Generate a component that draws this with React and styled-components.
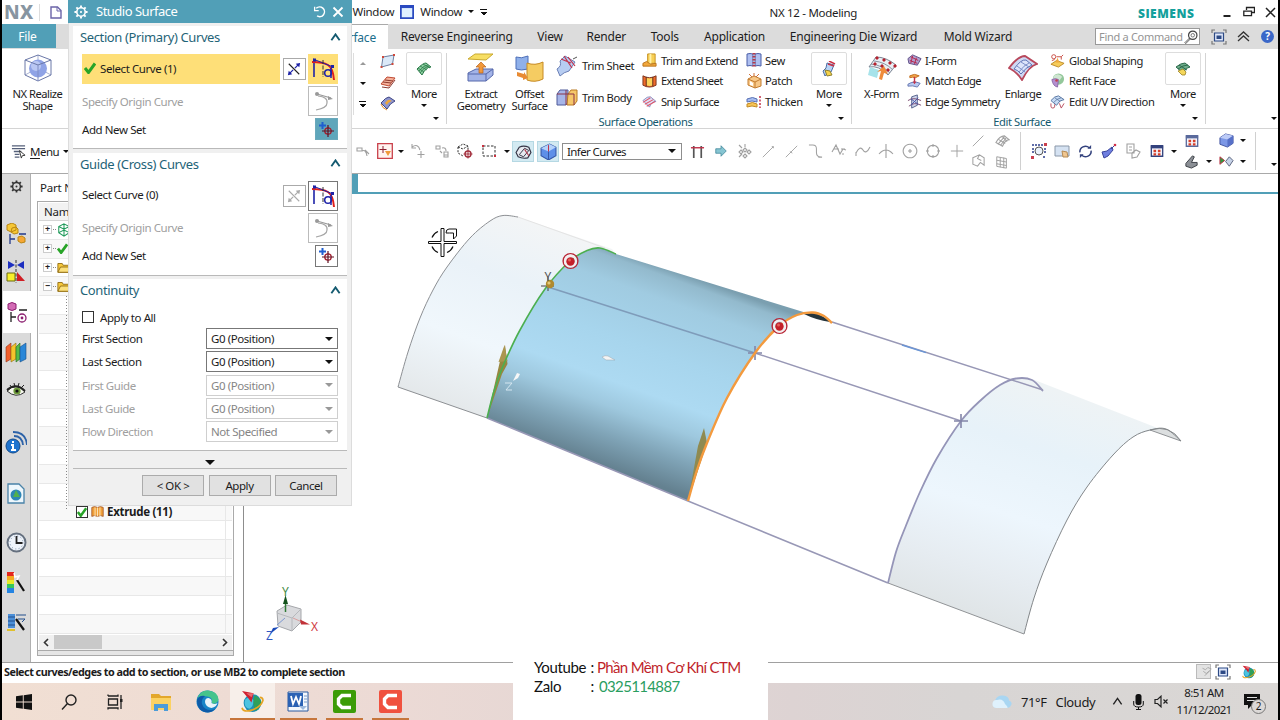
import React from 'react';
import styled, { createGlobalStyle } from 'styled-components';

const teal = '#519fb7';
const ink = '#1c1c1c';

/* smooth path through a list of points */
const curve = (pts, move = true) => {
    let d = move ? `M${pts[0][0]},${pts[0][1]}` : '';
    for (let i = 0; i < pts.length - 1; i++) {
        const p0 = pts[i - 1] || pts[i];
        const p1 = pts[i];
        const p2 = pts[i + 1];
        const p3 = pts[i + 2] || p2;
        d += ` C${p1[0] + (p2[0] - p0[0]) / 6},${p1[1] + (p2[1] - p0[1]) / 6} ${p2[0] - (p3[0] - p1[0]) / 6},${p2[1] - (p3[1] - p1[1]) / 6} ${p2[0]},${p2[1]}`;
    }
    return d;
};

const Icon = ({ w = 16, h = w, vw = 16, vh = vw, children }) => (
    <IconSvg width={w} height={h} viewBox={`0 0 ${vw} ${vh}`} fill="none">
        {children}
    </IconSvg>
);

/* ---------- icons ---------- */

const Gear = ({ size = 14, color = '#333' }) => (
    <Icon w={size}>
        <circle cx="8" cy="8" r="4.8" stroke={color} strokeWidth="1.8" />
        <path d="M8 0.5V3M8 13v2.5M0.5 8H3M13 8h2.5M2.7 2.7l1.8 1.8M11.5 11.5l1.8 1.8M13.3 2.7l-1.8 1.8M4.5 11.5l-1.8 1.8" stroke={color} strokeWidth="2.2" />
        <circle cx="8" cy="8" r="1.2" fill={color} />
    </Icon>
);

const RealizeIcon = () => (
    <Icon w={28} vw={28}>
        <path d="M14 1v13L1 21M14 14l13 7" stroke="#a9b3d2" />
        <circle cx="14" cy="14.5" r="9" fill="#8fa3e6" />
        <circle cx="12" cy="12" r="5" fill="#b9c7f3" />
        <path d="M14 1L27 6v15L14 27 1 21V6zM1 6l13 5 13-5" stroke="#6b78a8" strokeWidth="1" />
        <path d="M14 11v16" stroke="#7f8dc4" />
    </Icon>
);

const PlaneIcon = () => (
    <Icon w={16}>
        <path d="M3 4l11-2-1.5 9L1.5 14z" fill="#dbe9f8" stroke="#6d7fa0" />
        <path d="M2 3h2v2H2zM13 1h2v2h-2zM11.5 10h2v2h-2zM.5 13h2v2h-2z" fill="#d0493a" />
    </Icon>
);

const RuledIcon = () => (
    <Icon w={16}>
        <path d="M1 10l6-7 8 1-6 8z" fill="#f5b19a" stroke="#c04a33" />
        <path d="M3 8l8 1M5 6l8 1M2 13l7 1 6-8" stroke="#8c3a30" />
    </Icon>
);

const SweptIcon = () => (
    <Icon w={16}>
        <path d="M1 8q5-6 8-6l6 4q-5 2-8 8z" fill="#8d95cf" stroke="#3f4684" />
        <path d="M5 8q3-4 5-3l2 1q-4 1-5 4z" fill="#f0a637" />
        <path d="M1 9q1 4 6 6" stroke="#e08a25" />
    </Icon>
);

const MeshIcon = () => (
    <Icon w={16}>
        <path d="M1 8q6-6 9-6l5 4q-5 0-9 8z" fill="#8ccfa0" stroke="#2c7a4a" />
        <path d="M3 10q5-6 9-6M4 12q4-6 9-7M4 5l7 4M7 3l7 4M2 7l6 4" stroke="#2c7a4a" strokeWidth=".8" />
    </Icon>
);

const ExtractIcon = () => (
    <Icon w={28} h={30} vw={28} vh={30}>
        <path d="M1 6l7-5h18l-7 6z" fill="#f7de63" stroke="#c9a92f" />
        <path d="M1 20l8-4h17v6l-7 6H1z" fill="#a3b4e8" stroke="#5668ab" />
        <path d="M1 21h18l7-5M19 21v7" stroke="#5668ab" />
        <path d="M14 9l5 5h-3v6h-4v-6H9z" fill="#f0983a" stroke="#b9621a" strokeWidth=".7" />
    </Icon>
);

const OffsetIcon = () => (
    <Icon w={29} vw={29}>
        <path d="M1 3q5 2 12-1v13q-7 2-12 0z" fill="#8fb0ea" stroke="#4d6fb8" />
        <path d="M12 9q8 3 16-1v17q-8 4-16 1z" fill="#f5cc62" stroke="#c78a23" />
        <path d="M2 18l7 2v-2l4 6-5 2v-2l-6-2z" fill="#e88b33" />
    </Icon>
);

const TrimSheetIcon = () => (
    <Icon w={22} vw={22}>
        <path d="M4 6L9 1l10 6-6 9q-5 1-9 5l-3-7q5-3 3-8z" fill="#b7cdf2" stroke="#6b7fb5" />
        <path d="M8 1l8 12M12 2l7 9M5 4l10 4" stroke="#c2324a" strokeWidth="1.2" />
        <path d="M17 4l4-2" stroke="#555" />
    </Icon>
);

const TrimBodyIcon = () => (
    <Icon w={22} h={17} vw={22} vh={17}>
        <path d="M1 5l3-4h8v12l-2 3H1z" fill="#a6b5e8" stroke="#4f5a99" />
        <path d="M12 5l3-4h6v11l-3 4h-7z" fill="#f6c76a" stroke="#b97a25" />
        <path d="M1 5h17v11M10 1v15" stroke="#8c3346" />
    </Icon>
);

const TrimExtendIcon = () => (
    <Icon w={15}>
        <path d="M6 1h8v10H6z" fill="#f7cf55" stroke="#c48f1e" />
        <path d="M1 11l4-2 4 3 6-1v3H1z" fill="#f2a83c" stroke="#b9731c" />
        <path d="M9 1v10" stroke="#fff1a8" strokeWidth="2" />
    </Icon>
);

const ExtendIcon = () => (
    <Icon w={15}>
        <path d="M1 3q7 4 14 0v10q-7 4-14 0z" fill="#ef6a2a" stroke="#7a3520" />
        <path d="M4.5 5q4 1.5 7 0v8q-3 1.5-7 0z" fill="#fbd45b" />
        <path d="M4.5 4v10M11.5 4v10" stroke="#5a2a1a" />
    </Icon>
);

const SnipIcon = () => (
    <Icon w={15}>
        <path d="M1 7q5-5 8-4l6 5q-5 0-7 6z" fill="#dfe2f8" stroke="#8b8fc0" />
        <path d="M1 9l8-5M3 11l9-5M5 13l9-5" stroke="#e0566a" strokeWidth="1.1" />
    </Icon>
);

const SewIcon = () => (
    <Icon w={16}>
        <path d="M1 2q3-1 6 0v12q-3-1-6 0zM15 2q-3-1-6 0v12q3-1 6 0z" fill="#aebff0" stroke="#4b5fa8" />
        <path d="M8 1v14" stroke="#b33a4c" strokeWidth="3" strokeDasharray="1.5 1.5" />
    </Icon>
);

const PatchIcon = () => (
    <Icon w={16}>
        <path d="M2 6l6-3 7 3v7l-6 2-7-3z" fill="#f8c888" stroke="#c27c30" />
        <path d="M2 6l7 3 6-3M9 9v6" stroke="#c27c30" />
        <path d="M3 1l3 3M8 0v3M13 1l-3 3" stroke="#d0713a" />
        <path d="M4 8l3 2v3l-3-1z" fill="#fff" />
    </Icon>
);

const ThickenIcon = () => (
    <Icon w={16}>
        <path d="M1 5q6-3 10 0v3q-5-2-10 0z" fill="#a6bdf0" stroke="#5971b5" />
        <path d="M1 10q6-3 10 0v3q-5-2-10 0z" fill="#f6c455" stroke="#c28a25" />
        <path d="M14 2v12" stroke="#c2324a" strokeWidth="1.5" strokeDasharray="2 1.5" />
    </Icon>
);

const CutMoreIcon = () => (
    <Icon w={16}>
        <path d="M6 2l7 2-3 7q-4 0-6 4l-2-5q4-2 4-8z" fill="#b9d3f5" stroke="#4c6fa8" />
        <path d="M4 9l5 1 2 4-5 1z" fill="#f5d24c" stroke="#8f8130" />
        <path d="M8 0l6 3M7 3l6 2" stroke="#cc3145" strokeWidth="1.5" />
    </Icon>
);

const XFormIcon = () => (
    <Icon w={30} h={27} vw={30} vh={27}>
        <path d="M9 2q10 0 20 8l-8 10Q12 10 2 12z" fill="#e9eef5" stroke="#7d8795" />
        <path d="M7 6q11 1 19 9M4 9q11 1 19 9" stroke="#8a93a0" />
        <path d="M3 12l9 3-2 8-9-3z" fill="#a7e3ea" />
        <path d="M12 24l2-8-4 1 7-6 4 8-4-1-2 7z" fill="#ef8b3b" />
        <path d="M9 2h2v2H9zM16 4h2v2h-2zM22 7h2v2h-2zM27 10h2v2h-2zM7 8h2v2H7zM14 10h2v2h-2zM20 14h2v2h-2z" fill="#b5232f" stroke="#b5232f" />
    </Icon>
);

const IFormIcon = () => (
    <Icon w={15}>
        <path d="M1 6l5-4 9 4-4 7-9-2z" fill="#b0a0cf" stroke="#5d4f86" />
        <path d="M4 4l8 4M3 8l8 3M6 3L4 11M10 5l-2 7" stroke="#b5234a" />
    </Icon>
);

const MatchIcon = () => (
    <Icon w={15}>
        <path d="M3 3q5-3 10 0l-4 2q-3-1-6 0z" fill="#f3a74a" stroke="#c16f22" />
        <path d="M8 4v6" stroke="#c2324a" strokeWidth="1.5" />
        <path d="M1 12q6-4 13-1l-3 4q-5-2-10-1z" fill="#b9c8f0" stroke="#6376b0" />
        <path d="M6 9l2 3 2-3z" fill="#c2324a" />
    </Icon>
);

const EdgeSymIcon = () => (
    <Icon w={15}>
        <path d="M5 3l6-2v11l-6 3z" fill="#cfd6ec" stroke="#525f8a" />
        <path d="M1 7q6-4 14 0M2 13q6-5 13-1" stroke="#7a4a70" />
        <path d="M4 5l8 6M12 4l-8 8" stroke="#4658a8" />
    </Icon>
);

const EnlargeIcon = () => (
    <Icon w={30} h={26} vw={30} vh={26}>
        <path d="M1 13Q10 1 17 1l12 8Q21 11 14 25 9 17 1 13z" fill="#cfd8f3" stroke="#b8485c" strokeWidth="1.8" />
        <path d="M6 14Q13 4 18 5l6 5q-6 2-11 9-3-4-7-5z" fill="#dde4fa" stroke="#5d71b5" />
        <path d="M9 11l8 6M13 7l8 5M11 17q5-7 10-9" stroke="#7d8fc8" />
    </Icon>
);

const GlobalIcon = () => (
    <Icon w={15}>
        <circle cx="4" cy="4" r="2.2" stroke="#c8493f" />
        <path d="M7 4h5l2-2M12 4v3M2 8l3-1" stroke="#c8493f" />
        <path d="M1 12l6-4 8 3-6 4z" fill="#f6cc5a" stroke="#bd8a28" />
        <path d="M6 10l2-5 2 5" fill="#f0a83e" />
    </Icon>
);

const RefitIcon = () => (
    <Icon w={15}>
        <circle cx="9" cy="6.5" r="6" fill="#93c79a" />
        <path d="M4 3q5-4 9 1l-3 4-7 1z" fill="#cfe6d2" />
        <path d="M2 7q4-2 7 0l-1 8q-5-1-6-8z" fill="#b48fd0" stroke="#8a6aa8" />
        <circle cx="7" cy="8" r="1.4" fill="#c4404d" />
    </Icon>
);

const UVIcon = () => (
    <Icon w={15}>
        <path d="M1 7q4-5 8-5l6 4q-5 0-8 6z" fill="#c8dcf5" stroke="#54729f" />
        <path d="M1 10v3q0 2 2 2t2-2v-2M10 10l2 5 3-5" stroke="#b84a5c" />
        <path d="M5 4l6 4M4 9q3-4 8-5" stroke="#54729f" strokeWidth=".8" />
    </Icon>
);

const EditMoreIcon = () => (
    <Icon w={16}>
        <path d="M1 6q5-4 9-4l5 4q-4 0-7 6z" fill="#6fae8c" stroke="#2d6a4c" />
        <path d="M3 8q5-4 10-4M4 4l8 5" stroke="#2d6a4c" />
        <path d="M3 10l5-2 3 3-1 3H7z" fill="#f5d75b" stroke="#9a8125" strokeWidth=".8" />
    </Icon>
);

const CurveRuleIcon = () => (
    <Icon w={24} vw={24}>
        <path d="M3 20V2" stroke="#1d22a8" strokeWidth="1.6" />
        <path d="M1 5q11 0 16 3t6 15" stroke="#e0201c" strokeWidth="2" />
        <path d="M2 2l20 8" stroke="#1d22a8" />
        <path d="M2 1.5h3v3H2zM20 8h3v3h-3z" fill="#1d22a8" />
        <path d="M12 3v17" stroke="#333" strokeDasharray="4 1.5" />
        <path d="M20 11v10" stroke="#1d22a8" strokeWidth="1.5" />
        <circle cx="17" cy="16" r="3.3" stroke="#1d22a8" strokeWidth="1.5" />
    </Icon>
);

const ReverseIcon = ({ off }) => (
    <Icon w={14}>
        <path d="M2 2l12 12" stroke={off ? '#aaa' : '#222'} strokeWidth="1.3" />
        <path d="M3 13l4-4M9 7l4-4" stroke={off ? '#aaa' : '#1d22a8'} strokeWidth="1.5" />
        <path d="M15 1l-1 5-4-4zM1 15l1-5 4 4z" fill={off ? '#aaa' : '#1d22a8'} />
    </Icon>
);

const OriginIcon = () => (
    <Icon w={22} vw={22}>
        <path d="M6 6q10 1 9 7 0 5-11 7" stroke="#a5a5a5" strokeWidth="1.2" />
        <path d="M5 4l14 4" stroke="#999" strokeWidth="1.2" />
        <circle cx="5" cy="4" r="2" fill="#999" />
        <path d="M21 9l-5-3v4z" fill="#999" />
    </Icon>
);

const NewSetIcon = () => (
    <Icon w={17} vw={17}>
        <path d="M4.5 1v7M1 4.5h7" stroke="#1f5fd0" strokeWidth="2" />
        <circle cx="10" cy="10" r="3.2" stroke="#a32030" strokeWidth="1.3" />
        <path d="M10 4v12M4 10h12" stroke="#5e1020" strokeWidth="1.2" />
    </Icon>
);

const Check = ({ size = 12 }) => (
    <Icon w={size} vw={12}>
        <path d="M1 6l3.5 4.5L11 1.5" stroke="#28a428" strokeWidth="3" />
    </Icon>
);

const WindowsIcon = ({ color = '#9aa0a8' }) => (
    <Icon w={14}>
        <path d="M1.5 2h13v12h-13z" fill="#f4f7ff" stroke={color} strokeWidth="1.5" />
        <path d="M1 3.5h14" stroke={color} strokeWidth="3" />
        <path d="M4 6.5h3v3H4zM9 6.5h3v3H9zM4 10.500h3v2.500H4zM9 10.500h3v2.500H9z" fill="#d6402b" />
    </Icon>
);

const CubeIcon = () => (
    <Icon w={15}>
        <path d="M1 5l6-4 8 2v8l-6 4-8-3z" fill="#7c97e6" stroke="#41539f" />
        <path d="M1 5l8 2 6-4-8-2z" fill="#bccbf7" />
        <path d="M9 7v8l6-4V3z" fill="#5770c8" />
    </Icon>
);

const NxBall = ({ size = 22 }) => (
    <Icon w={size} vw={22}>
        <circle cx="11" cy="12.5" r="8.5" fill="#1d8fb8" />
        <path d="M4 9q5-4 8 1 0 6-4 8-6-2-4-9z" fill="#4cc3e0" />
        <path d="M13 5q5 2 6.500 7-1 6-6 8-3-7-.5-15z" fill="#2fa05a" />
        <path d="M1 1l11 2-2 9-3-4z" fill="#cf1f2f" />
        <path d="M5 3l7 0-2 4z" fill="#e86a70" />
        <path d="M1 17q1 5 10 2 8-3 10-9 0-3-3-3" stroke="#e5a423" strokeWidth="1.6" />
    </Icon>
);

const FullscreenIcon = () => (
    <Icon w={16}>
        <path d="M1 4V1h3M12 1h3v3M15 12v3h-3M4 15H1v-3" stroke="#777" strokeWidth="1.2" />
        <path d="M3.5 4h9v8h-9z" fill="#dfe7fa" stroke="#2d4a85" strokeWidth="1.2" />
        <path d="M5.5 6.500h5v3.500h-5z" fill="#2d4a85" />
    </Icon>
);

const Chevron = ({ w = 12, color = '#145a70', sw = 2 }) => (
    <Icon w={w} h={w * 0.75} vw={12} vh={9}>
        <path d="M1.5 8L6 1.5 10.5 8" stroke={color} strokeWidth={sw} />
    </Icon>
);

const Grey = ({ d, size = 16 }) => (
    <Icon w={size}>
        <path d={d} stroke="#a0a0a0" strokeWidth="1.1" />
    </Icon>
);

/* ---------- ribbon parts ---------- */

const Big = ({ icon, w, children }) => (
    <BigButton $w={w}>
        <BigIcon>{icon}</BigIcon>
        <span>{children}</span>
    </BigButton>
);

const More = ({ icon }) => (
    <MoreButton>
        <MoreFrame>{icon}</MoreFrame>
        <span>More</span>
        <Caret />
    </MoreButton>
);

const List = ({ w, tall, items, gap, tight }) => (
    <RibbonList $w={w} $tall={tall} $tight={tight}>
        {items.map(([icon, text]) => (
            <RibbonItem key={text} $gap={gap}>
                {icon}
                {text}
            </RibbonItem>
        ))}
    </RibbonList>
);

const Ribbon = () => (
    <RibbonBar>
        <RibbonGroup $w={445}>
            <GroupBody>
                <Big w={71} icon={<RealizeIcon />}>NX Realize<br />Shape</Big>
                <GallerySpacer />
                <GalleryArrows>
                    <Caret $up $color="#999" />
                    <Caret />
                    <Caret $line />
                </GalleryArrows>
                <GalleryIcons>
                    <PlaneIcon />
                    <RuledIcon />
                    <SweptIcon />
                </GalleryIcons>
                <More icon={<MeshIcon />} />
            </GroupBody>
            <GroupFoot><Caret /></GroupFoot>
        </RibbonGroup>
        <RibbonGroup $w={405}>
            <GroupBody $pad={8}>
                <Big w={52} icon={<ExtractIcon />}>Extract<br />Geometry</Big>
                <Big w={45} icon={<OffsetIcon />}>Offset<br />Surface</Big>
                <List tall w={89} gap={4} items={[[<TrimSheetIcon />, 'Trim Sheet'], [<TrimBodyIcon />, 'Trim Body']]} />
                <List tight w={104} gap={4} items={[[<TrimExtendIcon />, 'Trim and Extend'], [<ExtendIcon />, 'Extend Sheet'], [<SnipIcon />, 'Snip Surface']]} />
                <List w={66} gap={3} items={[[<SewIcon />, 'Sew'], [<PatchIcon />, 'Patch'], [<ThickenIcon />, 'Thicken']]} />
                <More icon={<CutMoreIcon />} />
            </GroupBody>
            <GroupFoot>Surface Operations<Caret /></GroupFoot>
        </RibbonGroup>
        <RibbonGroup $w={354}>
            <GroupBody $pad={5}>
                <Big w={49} icon={<XFormIcon />}>X-Form</Big>
                <List tight w={91} gap={3} items={[[<IFormIcon />, 'I-Form'], [<MatchIcon />, 'Match Edge'], [<EdgeSymIcon />, 'Edge Symmetry']]} />
                <Big w={52} icon={<EnlargeIcon />}>Enlarge</Big>
                <List w={116} gap={4} items={[[<GlobalIcon />, 'Global Shaping'], [<RefitIcon />, 'Refit Face'], [<UVIcon />, 'Edit U/V Direction']]} />
                <More icon={<EditMoreIcon />} />
            </GroupBody>
            <GroupFoot $shift={-12}>Edit Surface<Caret /></GroupFoot>
        </RibbonGroup>
        <RibbonTail><Caret /></RibbonTail>
    </RibbonBar>
);

const snapIcons = [
    <Icon w={15}><path d="M4 2v13M12 2v13" stroke="#555" strokeWidth="1.8" /><path d="M1 4h14" stroke="#c2324a" strokeWidth="1.5" /></Icon>,
    <Icon w={12}><path d="M1 5h7V1l7 7-7 7v-4H1z" fill="#86c5d2" stroke="#3c8397" /></Icon>,
    <Grey d="M2 2l3 3M2 14l3-3M8 5l2 2-2 2-2-2zM8 1v3M12 7l2 2-2 2-2-2zM8 11l2 2-2 2-2-2zM4 7l2 2-2 2-2-2z" />,
    <Grey size={13} d="M1 15L14 2M12 2h2v2" />,
    <Grey size={13} d="M1 15L15 1M6 8l3 2" />,
    <Grey size={15} d="M3 1h2q4 0 4 4v4q0 5 5 5M1 1h4M11 14h4" />,
    <Grey size={16} d="M1 9l4-7 4 9 3-5 3 1M3 6h5M10 6h4M11 11h2" />,
    <Grey size={16} d="M1 10q4-8 7-3t7-3M1 13v-4" />,
    <Grey size={16} d="M8 1v14M1 11q7-8 14 0" />,
    <Grey size={16} d="M8 1.2a6.800 6.800 0 1 0 .01 0zM8 6v4M6 8h4" />,
    <Grey size={16} d="M8 2.200a5.800 5.800 0 1 0 .01 0zM8 1v3M8 12v3M1 8h3M12 8h3" />,
    <Grey size={14} d="M8 1v14M1 8h14" />,
];

const Toolbar = () => (
    <ToolbarBar>
        <MenuButton>
            <Icon w={15}>
                <path d="M1 2h14M1 5h14M3 8h8M4 11h5M4 14h5" stroke="#55607a" strokeWidth="1.4" />
                <path d="M9 7l6 5-3 .5L11 15z" fill="#fff" stroke="#333" />
            </Icon>
            <span><u>M</u>enu</span>
            <Caret />
        </MenuButton>
        <Slot $w={22}><Grey d="M2 5h5v3H2zM10 7l4 4M7 8q4-2 5 5" /></Slot>
        <Slot $w={22}>
            <Icon w={16}><path d="M.7.7h14.600v14.600H.7z" fill="#fff3f0" stroke="#c9414b" strokeWidth="1.3" /><path d="M6 3v7M2.5 6.5h7" stroke="#8c2030" /><path d="M8 8h6l-3 5z" fill="#f09a3a" /></Icon>
        </Slot>
        <Slot $w={10}><Caret /></Slot>
        <Slot $w={24}><Grey d="M2 4q6-4 8 3M2 1v4h4M11 8v7M7.5 11.5h7" /></Slot>
        <Slot $w={24}><Grey d="M2 3h4v3H2zM8 5q4-1 4 3M6 8l2 2M10 9h4v5h-4zM10 12h4" /></Slot>
        <Slot $w={22}>
            <Icon w={16}><path d="M1 4l5-3 5 2v5M1 4v6l5 3M1 4l5 2 5-3" stroke="#333" strokeDasharray="2 1.2" /><circle cx="11" cy="11" r="3" stroke="#a3303e" strokeWidth="1.4" /><path d="M11 6.5v9M6.5 11h9" stroke="#a3303e" /></Icon>
        </Slot>
        <Slot $w={26}>
            <Icon w={16}><path d="M2 3h12v10H2z" stroke="#333" strokeDasharray="2.5 1.5" /><path d="M1 2h2v2H1zM13 12h2v2h-2z" fill="#c9303e" /></Icon>
        </Slot>
        <Slot $w={10}><Caret /></Slot>
        <Toggle>
            <Icon w={17}><path d="M1 9l3-5q4-2 9 0l2 5-3 5q-5 1-9-1z" fill="#e7eaf0" stroke="#334" strokeWidth="1.1" /><path d="M4 11l5-6 4 2-5 6z" stroke="#334" strokeWidth=".9" /><path d="M9 6l4 6" stroke="#b33a4c" /></Icon>
        </Toggle>
        <Toggle>
            <Icon w={17}><path d="M1 5l8-4 6 3v8l-7 4-7-4z" fill="#5e8fe8" stroke="#3557a8" /><path d="M1 5l7 3 7-4-6-3z" fill="#b5d3fb" /><path d="M8 8v8" stroke="#3557a8" /><path d="M8 2v6" stroke="#c2324a" /></Icon>
        </Toggle>
        <RuleSelect>Infer Curves<Caret $big /></RuleSelect>
        <SnapIcons>
            {snapIcons.map((icon, i) => <Slot key={i} $w={23.55}>{icon}</Slot>)}
        </SnapIcons>
        <Stack $w={20}>
            <Grey size={13} d="M1 15L14 2" />
            <Grey size={15} d="M2 5l7-3 5 3v8l-4-3-3 4-5-2zM9 2l-2 4 4 2" />
        </Stack>
        <Stack $w={27}>
            <Grey size={15} d="M1 9q4-7 9-7l5 4q-4 0-7 7zM4 6l7 4M8 3l5 5M3 11l7-8M6 12l6-8" />
            <Grey size={14} d="M2 2l11 2v11L2 13zM6 3v11M10 3v12M2 6l11 2M2 10l11 2" />
        </Stack>
        <Slot $w={4} />
        <VRule $h={38} />
        <Slot $w={6} />
        <Slot $w={24}>
            <Icon w={16}><path d="M1 2h14M1 14h3M12 14h3M2 5v6M14 5v6" stroke="#2c3f8c" strokeDasharray="2 1" strokeWidth="1.5" /><circle cx="8" cy="8" r="4" fill="#e9f2fb" stroke="#555" /><path d="M0 13h3v3H0zM13 0h3v3h-3z" fill="#c9404e" /></Icon>
        </Slot>
        <Slot $w={23}>
            <Icon w={16}><path d="M1 3h14v10H1z" fill="#d5e2f2" stroke="#8a97a8" /><path d="M8 8l5 1 1 5H9z" fill="#f0c690" stroke="#b58b55" /></Icon>
        </Slot>
        <Slot $w={24}>
            <Icon w={15}><path d="M2 9a6 6 0 0 1 10-5M14 7a6 6 0 0 1-10 5" stroke="#33427d" strokeWidth="1.6" /><path d="M10 5h4V1zM6 11H2v4z" fill="#33427d" /></Icon>
        </Slot>
        <Slot $w={22}>
            <Icon w={16}><path d="M1 9l5-1 5-4 1 3-5 6-4 2z" fill="#6f7fe0" stroke="#3a459c" /><path d="M10 6l4-4" stroke="#3a459c" /><circle cx="14" cy="2" r="1.3" fill="#d0304a" /></Icon>
        </Slot>
        <Slot $w={26}><Grey d="M2 1h7v9H2zM4 4h3M4 7h3M7 10l4-3 4 2-3 5-5 1z" /></Slot>
        <Slot $w={22}><WindowsIcon color="#33427d" /></Slot>
        <Slot $w={12}><Caret /></Slot>
        <Stack $w={24}>
            <WindowsIcon color="#5a6a9c" />
            <Icon w={15}><path d="M2 10l7-8 2 1-3 6h6v3l-6 3-6-2z" fill="#8b8f95" stroke="#3b3f45" /></Icon>
        </Stack>
        <Stack $w={11}><span /><Caret /></Stack>
        <Stack $w={23}>
            <CubeIcon />
            <Icon w={15}><path d="M1 3l5 4-5 4z" fill="#2c9a3e" stroke="#c2324a" /><path d="M7 8l4-5 4 4-4 6z" fill="#c7d3e8" stroke="#55607a" /></Icon>
        </Stack>
        <Stack $w={10}><Caret /><Caret /></Stack>
        <Slot $w={7} />
        <VRule $h={38} />
        <ToolbarTail><Caret /></ToolbarTail>
    </ToolbarBar>
);

/* ---------- left side ---------- */

const ResourceBar = () => (
    <Resources>
        <ResourceTab $h={24}><Gear size={13} /></ResourceTab>
        <ResourceTab $h={52} $end>
            <Icon w={20} h={22} vw={20} vh={22}>
                <path d="M1 2l5-2 4 2v5l-5 2-4-2zM6 5l4-1 2 2v4l-4 1-3-2z" fill="#f6c735" stroke="#b98612" />
                <path d="M4 11v10M4 16h5M13 11h7" stroke="#223a8c" strokeWidth="1.3" />
                <path d="M12 14l4-1 3 2v4l-4 1-3-2z" fill="#f6a735" stroke="#b98612" />
            </Icon>
        </ResourceTab>
        <ResourceTab $h={38} $end>
            <Icon w={20} h={23} vw={20} vh={23}>
                <path d="M2 1l7 4-7 4zM18 1l-7 4 7 4z" fill="#1d2fc0" />
                <path d="M10 0v23" stroke="#333" strokeDasharray="3 1.5" />
                <path d="M1 13h8v8H1z" fill="#f8ef2a" stroke="#6b6a10" />
                <path d="M11 12l8 9h-8z" fill="#d01e24" />
            </Icon>
        </ResourceTab>
        <ResourceTab $h={42} $active>
            <Icon w={20} h={22} vw={20} vh={22}>
                <path d="M1 3q4-3 8 0v5q-4 3-8 0z" fill="#d36bb5" stroke="#8c1f70" />
                <path d="M4 11v10M4 16h5M12 9h8" stroke="#222" strokeWidth="1.3" />
                <circle cx="15" cy="17" r="4" stroke="#8c1f70" strokeWidth="1.3" />
                <circle cx="15" cy="17" r="1.4" fill="#8c1f70" />
            </Icon>
        </ResourceTab>
        <ResourceTab $h={38}>
            <Icon w={22} vw={22}>
                <path d="M1 6l5-4v16l-5 3z" fill="#f2602c" stroke="#963317" strokeWidth=".6" />
                <path d="M6 6l5-4v16l-5 3z" fill="#f5c32c" stroke="#8c6a10" strokeWidth=".6" />
                <path d="M11 6l4-4v16l-4 3z" fill="#55ba4a" stroke="#22691d" strokeWidth=".6" />
                <path d="M15 6l6-4v16l-6 3z" fill="#2a87d8" stroke="#184f86" strokeWidth=".6" />
            </Icon>
        </ResourceTab>
        <ResourceTab $h={38}>
            <Icon w={20} h={14} vw={20} vh={14}>
                <path d="M1 8q9-9 18 1-9 7-18-1z" fill="#f6f8ee" stroke="#333" />
                <circle cx="11" cy="8" r="3.6" fill="#6d9a3a" />
                <circle cx="11" cy="8" r="1.6" fill="#111" />
                <path d="M1 6l2 1M4 2l2 3M8 0l1 4M13 0l-1 4M18 2l-3 3" stroke="#222" />
                <path d="M1 7q9-8 18 1" stroke="#222" strokeWidth="1.8" />
            </Icon>
        </ResourceTab>
        <ResourceTab $h={66}>
            <Icon w={22} h={23} vw={22} vh={23}>
                <circle cx="8" cy="15" r="7" fill="#1f74cf" stroke="#134b8c" />
                <path d="M8 10v2M6 14h2v5M6 19h5" stroke="#fff" strokeWidth="2" />
                <path d="M9 5q8 0 9 9M8 1q13 0 14 13" stroke="#2c62a8" strokeWidth="1.8" />
            </Icon>
        </ResourceTab>
        <ResourceTab $h={36}>
            <Icon w={18} h={21} vw={18} vh={21}>
                <path d="M1 1h11l5 5v14H1z" fill="#eef7fc" stroke="#4a83a8" strokeWidth="1.3" />
                <circle cx="9" cy="12" r="5.5" fill="#2e86b5" />
                <path d="M9 7l4 7H6z" fill="#53b04c" />
            </Icon>
        </ResourceTab>
        <ResourceTab $h={62}>
            <Icon w={21} vw={21}>
                <circle cx="10.5" cy="10.5" r="9" fill="#eef3fa" stroke="#65707f" strokeWidth="2" />
                <circle cx="10.5" cy="10.5" r="6.5" stroke="#7e93b0" strokeDasharray="1 2.4" />
                <path d="M10.5 4v7h6" stroke="#222" strokeWidth="1.8" />
            </Icon>
        </ResourceTab>
        <ResourceTab $h={18}>
            <Icon w={20} h={21} vw={20} vh={21}>
                <path d="M1 0h7v4H1z" fill="#e3261c" />
                <path d="M1 4h7v4H1z" fill="#f6a81f" />
                <path d="M1 8h7v4H1z" fill="#e7ea28" />
                <path d="M1 12h7v4H1z" fill="#37c75a" />
                <path d="M1 16h7v5H1z" fill="#2484e3" />
                <path d="M11 8l7 11" stroke="#111" strokeWidth="2.2" />
                <path d="M8 1l1 4 4-1-2 4" stroke="#fff" strokeWidth="1.5" />
            </Icon>
        </ResourceTab>
        <ResourceTab $h={62}>
            <Icon w={21} h={20} vw={21} vh={20}>
                <path d="M2 2h7v14H2z" fill="#4b8fd8" />
                <path d="M2 5h7M2 9h7M2 13h7M10 3h10M12 7h7l-3 3" stroke="#234f8c" />
                <path d="M1 18h8" stroke="#e0c02c" strokeWidth="2" />
                <path d="M10 7l8 11" stroke="#111" strokeWidth="2.2" />
            </Icon>
        </ResourceTab>
    </Resources>
);

const Folder = () => (
    <Icon w={14}>
        <path d="M1 14V4h5l1 2h8v8z" fill="#f6c83c" stroke="#8f6a10" />
        <path d="M1 14l3-6h12l-3 6z" fill="#fbe07c" stroke="#8f6a10" />
    </Icon>
);

const treeTop = [
    ['+', <Icon w={14}><path d="M8 1l6 3v7l-6 4-6-4V4zM2 4l6 3 6-3M8 1v14M2 11l6-3 6 3" stroke="#1f9a5a" strokeWidth="1.2" /></Icon>],
    ['+', <Check size={11} />],
    ['+', <Folder />],
    ['−', <Folder />],
];

const Navigator = () => (
    <NavPane>
        <NavTitle>Part Navigator</NavTitle>
        <NavTable>
            <NavHead>Name</NavHead>
            {treeTop.map(([sign, icon], i) => (
                <NavRow key={i} $alt={i % 2}>
                    <Expander>{sign}</Expander>
                    <Dots />
                    {icon}
                </NavRow>
            ))}
            {Array.from({ length: 11 }, (_, i) => <NavRow key={i} $alt={i % 2} $branch />)}
            <NavRow $alt $leaf>
                <GreenBox><Check size={10} /></GreenBox>
                <Icon w={13}>
                    <path d="M1 3q3-2 7 0 4-2 7 0v11q-3-2-7 0-4-2-7 0z" fill="#f0a03a" stroke="#a3501a" />
                    <path d="M5 3v11M8 3v11M11 3v11" stroke="#fff0d0" />
                </Icon>
                Extrude (11)
            </NavRow>
            {Array.from({ length: 6 }, (_, i) => <NavRow key={i} $alt={i % 2} />)}
            <HScroll>
                <Icon w={9} vw={9}><path d="M6 1L2.5 4.5 6 8" stroke="#333" strokeWidth="1.6" /></Icon>
                <Thumb />
                <Icon w={9} vw={9}><path d="M3 1l3.5 3.5L3 8" stroke="#333" strokeWidth="1.6" /></Icon>
            </HScroll>
        </NavTable>
        <NavFoot />
    </NavPane>
);

/* ---------- model ---------- */

const ghostLeft = [[398, 387], [408, 352], [420, 318], [433, 290], [447, 267], [470, 238], [490, 221], [503, 215.5], [518, 217]];
const green = [[487, 418], [494, 391], [503, 366], [520, 330], [545, 289], [570, 261], [587, 250.5], [600, 248], [616, 254]];
const orange = [[688, 501], [697, 470], [707, 443], [727, 398], [755, 353], [779, 326], [797, 315], [813, 312.5], [824, 316], [832, 323]];
const violet = [[888, 583], [896, 552], [905, 528], [920, 492], [937, 458], [961, 421], [981, 400], [1000, 385], [1016, 378.5], [1032, 380], [1043, 391]];
const ghostRight = [[1024, 634], [1034, 598], [1047, 563], [1067, 520], [1087, 487], [1113, 455], [1133, 437], [1150, 430], [1166, 429], [1181, 441]];
const back = pts => [...pts].reverse();

const Handle = ({ x, y }) => (
    <g>
        <circle cx={x} cy={y} r="7.4" fill="none" stroke="#b82636" strokeWidth="1.4" />
        <circle cx={x} cy={y} r="5.4" fill="none" stroke="#f3eef0" strokeWidth="2.4" />
        <circle cx={x} cy={y + 0.5} r="4.2" fill="#c4202a" />
        <circle cx={x - 1} cy={y - 1} r="1.5" fill="#e4605a" />
    </g>
);

const Model = () => (
    <ModelSvg viewBox="244 194 1034 468">
        <defs>
            <linearGradient id="blue" gradientUnits="userSpaceOnUse" x1="700" y1="280" x2="630" y2="475">
                <stop offset="0" stopColor="#7b9fb0" />
                <stop offset=".04" stopColor="#93bacd" />
                <stop offset=".15" stopColor="#a0cbe1" />
                <stop offset=".4" stopColor="#a7d5ed" />
                <stop offset=".6" stopColor="#addaf2" />
                <stop offset=".72" stopColor="#9ec8de" />
                <stop offset=".86" stopColor="#7fa3b6" />
                <stop offset="1" stopColor="#648190" />
            </linearGradient>
            <linearGradient id="ghostL" gradientUnits="userSpaceOnUse" x1="540" y1="225" x2="470" y2="415">
                <stop offset="0" stopColor="#f3f5f6" />
                <stop offset=".3" stopColor="#eaf2f8" />
                <stop offset=".65" stopColor="#f0f7fc" />
                <stop offset="1" stopColor="#e4e8ea" />
            </linearGradient>
            <linearGradient id="ghostR" gradientUnits="userSpaceOnUse" x1="1085" y1="400" x2="1010" y2="630">
                <stop offset="0" stopColor="#eef3f5" />
                <stop offset=".25" stopColor="#e7f2f9" />
                <stop offset=".55" stopColor="#edf6fd" />
                <stop offset=".8" stopColor="#e6ecf1" />
                <stop offset="1" stopColor="#dfe4e6" />
            </linearGradient>
        </defs>
        <path d={`${curve(ghostLeft)} L612,249 L616,254 ${curve(back(green), false)} Z`} fill="url(#ghostL)" />
        <path d={curve(ghostLeft)} fill="none" stroke="#8d9094" />
        <path d="M398,387 L487,418" stroke="#8d9094" />
        <path d="M518,217 L605,248" stroke="#e4e4e4" />

        <path d={`${curve(violet)} L1032,379 L1160,429 ${curve([[1150, 430], ...back(ghostRight.slice(0, 7))], false)} Z`} fill="url(#ghostR)" />
        <path d="M1150,430 Q1170,424 1181,441 Z" fill="#dcdfe0" stroke="#909396" />
        <path d={curve(ghostRight)} fill="none" stroke="#83878a" />
        <path d="M888,583 L1024,634" stroke="#909396" />
        <path d={curve(violet)} fill="none" stroke="#9595b8" strokeWidth="1.8" />

        <path d={`${curve(green)} L805,312.500 ${curve(back(orange.slice(0, 8)), false)} Z`} fill="url(#blue)" />
        <path d="M804,314 Q818,310 830,322 Q816,320 804,314Z" fill="#26353c" />
        <path d="M548,287 L755,353" stroke="#7f9cba" strokeWidth="1.6" />
        <path d="M755,353 L961,421 M832,322 L1043,390 M487,418 L688,501 L888,583" stroke="#9898b6" strokeWidth="1.5" fill="none" />
        <path d="M902,345 L926,352.700" stroke="#6a96d6" strokeWidth="1.4" />
        <path d="M748,353h14M755,346v14M954,421h14M961,414v14" stroke="#8385a8" strokeWidth="1.6" />

        <path d="M487,418 L500,361 L505,345 L507.500,364 L502,374 Z" fill="#97873f" />
        <path d="M498.500,362 L504.500,345 L507.500,361 Z" fill="#ab9650" />
        <path d="M688,501 L698,446 L704,428 L707,443 Z" fill="#8f8a50" />
        <path d={curve(green)} fill="none" stroke="#4caf50" strokeWidth="1.6" />
        <path d={curve(orange)} fill="none" stroke="#f39a3e" strokeWidth="2.4" />

        <path d="M602,357q3-2 6-1l7,4-9,0z" fill="#f4f4f4" stroke="#9aa6ae" strokeWidth=".5" />
        <path d="M513,381l4,-8l3,1l-2,4z" fill="#f7f7f7" />
        <path d="M505,383h7l-6,7h6" stroke="#d4e6f0" fill="none" />

        <path d="M541,286h13M548,277v14" stroke="#444" strokeWidth="1" />
        <circle cx="550" cy="284" r="4.2" fill="#b08a2e" />
        <circle cx="549" cy="283" r="1.6" fill="#e4c877" />
        <AxisText x="544.500" y="281" fill="#555">Y</AxisText>
        <Handle x={570.5} y={261} />
        <Handle x={779.5} y={326} />

        <g stroke="#111" fill="none">
            <path d="M432 237.500a11 11 0 0 1 6-6M432 246.500a11 11 0 0 0 6 6M447 252.500a11 11 0 0 0 6-6" strokeWidth="1.2" />
            <path d="M428.500 241.500h12.500v-13h3v13h12.500v2H444v13h-3v-13h-12.500z" fill="#fff" />
            <path d="M446 233q0-4 3-4h7.500v7l-3 3v-6h-4z" fill="#fff" />
        </g>

        <path d="M277,611l10-6 14 4v13l-9 9-14-5z" fill="#d9dadd" stroke="#a5a7ab" />
        <path d="M277,613l15 5 9-9M292,618v13" stroke="#b6b8bc" fill="none" />
        <path d="M285.500,612V600" stroke="#2f7a35" strokeWidth="1.5" />
        <path d="M283,604l2.500-9 2.500 9z" fill="#14521d" />
        <path d="M293,618l9 4" stroke="#d8a0a0" />
        <path d="M310,624.500l-10-5 1 5z" fill="#c23238" />
        <path d="M285,618l-8 7" stroke="#7d98d0" />
        <path d="M270,634l3-6 6-1z" fill="#1949b8" />
        <AxisText x="282" y="596" fill="#3f8a45">Y</AxisText>
        <AxisText x="311" y="631" fill="#cf3a42">X</AxisText>
        <AxisText x="266" y="640" fill="#2f58c4">Z</AxisText>
    </ModelSvg>
);

/* ---------- dialog ---------- */

const CurveSection = ({ title, count, active }) => (
    <Section $h={123}>
        <SectionHead>{title}<Chevron w={11} /></SectionHead>
        <CurveRow $h={30}>
            <PickField $active={active}>
                {active && <Check size={12} />}
                Select Curve ({count})
            </PickField>
            <SmallBtn><ReverseIcon off={!active} /></SmallBtn>
            <WideBtn $active={active}><CurveRuleIcon /></WideBtn>
        </CurveRow>
        <CurveRow $h={34} $muted>
            Specify Origin Curve
            <WideBtn $muted><OriginIcon /></WideBtn>
        </CurveRow>
        <CurveRow $h={22}>
            Add New Set
            <SmallBtn $active={active}><NewSetIcon /></SmallBtn>
        </CurveRow>
    </Section>
);

const continuity = [
    ['First Section', 'G0 (Position)', false],
    ['Last Section', 'G0 (Position)', false],
    ['First Guide', 'G0 (Position)', true],
    ['Last Guide', 'G0 (Position)', true],
    ['Flow Direction', 'Not Specified', true],
];

const StudioSurface = () => (
    <Dialog>
        <DialogTitle>
            <Gear size={14} color="#fff" />
            <span>Studio Surface</span>
            <Icon w={13}><path d="M5 13.500A6 6 0 1 0 4 4" stroke="#fff" strokeWidth="1.8" /><path d="M2 2v5h5" stroke="#fff" strokeWidth="1.6" /></Icon>
            <Icon w={12} vw={12}><path d="M1.5 1.5l9 9M10.5 1.5l-9 9" stroke="#fff" strokeWidth="1.8" /></Icon>
        </DialogTitle>
        <CurveSection title="Section (Primary) Curves" count={1} active />
        <CurveSection title="Guide (Cross) Curves" count={0} />
        <Section $h={172}>
            <SectionHead>Continuity<Chevron w={11} /></SectionHead>
            <ApplyAll><CheckBox />Apply to All</ApplyAll>
            {continuity.map(([label, value, off]) => (
                <ContRow key={label} $off={off}>
                    {label}
                    <ContSelect $off={off}>{value}<Caret $big $color={off ? '#999' : '#111'} /></ContSelect>
                </ContRow>
            ))}
        </Section>
        <Expand><Caret $huge /></Expand>
        <DialogButtons>
            <DialogButton>&lt; OK &gt;</DialogButton>
            <DialogButton>Apply</DialogButton>
            <DialogButton>Cancel</DialogButton>
        </DialogButtons>
    </Dialog>
);

/* ---------- task bar ---------- */

const Camtasia = ({ color }) => (
    <Icon w={23} vw={23}>
        <rect width="23" height="23" rx="2" fill={color} />
        <path d="M18 5.500H9L5.500 9v5L9 17.500h9" stroke="#fff" strokeWidth="3.4" />
    </Icon>
);

const Taskbar = () => (
    <TaskBar>
        <TaskItem $w={44}>
            <Icon w={16}><path d="M0 2.300l6.800-1v6.200H0zM7.700 1.200L16 0v7.500H7.700zM0 8.500h6.800v6.200L0 13.700zM7.700 8.500H16V16l-8.300-1.200z" fill="#111" /></Icon>
        </TaskItem>
        <TaskItem>
            <Icon w={16}><circle cx="10" cy="6" r="5" stroke="#222" strokeWidth="1.4" /><path d="M6.500 9.500L1 15.500" stroke="#222" strokeWidth="1.4" /></Icon>
        </TaskItem>
        <TaskItem>
            <Icon w={16}><path d="M1.500 5h9v6h-9zM1 2V.5M1 2h10V.5M1 15.500V14h10v1.500M14 1v14" stroke="#222" strokeWidth="1.3" /><path d="M13 5h2.500v3H13z" fill="#222" /></Icon>
        </TaskItem>
        <TaskItem>
            <Icon w={22} h={20} vw={22} vh={20}>
                <path d="M1 2h8l2 2h10v4H1z" fill="#e3a72c" />
                <path d="M1 6h20v12H1z" fill="#fbd263" />
                <path d="M4 19v-7h14v7h-4v-3H8v3z" fill="#4c9cd8" />
            </Icon>
        </TaskItem>
        <TaskItem>
            <Icon w={23} vw={23}>
                <circle cx="11.5" cy="11.5" r="11" fill="#1784c7" />
                <path d="M1 9Q4 0 12 .5q10 1 10.500 9-1 5-7 4 2-6-4-7Q4 5 1 9z" fill="#45c48c" />
                <path d="M1 10q2-5 8-4-4 3-3 8 2 6 9 6 3 0 5-2-3 4-8 4.500Q1 22 1 10z" fill="#0d5ba8" />
                <path d="M9 12q0-4 3.500-4 4 1 3 5 3 2 6 0-1 4-6 5-6-1-6.500-6z" fill="#e8f4fa" />
            </Icon>
        </TaskItem>
        <TaskItem $w={45} $open $focus><NxBall size={23} /></TaskItem>
        <TaskItem $open>
            <Icon w={22} h={21} vw={22} vh={21}>
                <path d="M1 1h20v19H1z" fill="#f4f8fd" stroke="#2a5aa0" />
                <path d="M1 2h15v14H1z" fill="#2b62b4" />
                <path d="M4 5l2 8 3-7 3 7 2-8" stroke="#fff" strokeWidth="1.8" />
                <path d="M17 5h3M17 8h3M17 11h3" stroke="#7b9cc8" />
                <path d="M12 15h8l-4 4z" fill="#9db9dd" />
            </Icon>
        </TaskItem>
        <TaskItem $open><Camtasia color="#3c9c08" /></TaskItem>
        <TaskItem $open><Camtasia color="#f0513f" /></TaskItem>
        <Tray>
            <Weather>
                <Icon w={21} h={15} vw={21} vh={15}>
                    <path d="M5 14a4 4 0 0 1-1-7.500Q6 1 12 1.500t6 5q3 1 2.500 4-1 3-4 3.500z" fill="#a9d6f2" />
                    <path d="M5 14a4 4 0 0 1 1-8q6-2 8 4 4 4 2 4z" fill="#dff1fc" />
                </Icon>
                <span>71°F</span>
                <span>Cloudy</span>
            </Weather>
            <Chevron w={11} color="#222" sw={1.5} />
            <Icon w={11} h={16} vw={11} vh={16}><rect x="2.5" width="6" height="11" rx="2.5" fill="#111" /><path d="M.7 7v3q0 3 4.800 3t4.800-3V7M5.500 13v3M3 15.500h5" stroke="#111" /></Icon>
            <Icon w={15} h={13} vw={15} vh={13}><path d="M1 4.500h2.500L7 1.200v10.600L3.500 8.500H1z" stroke="#222" strokeWidth="1.2" /><path d="M9.500 4.500l4 4M13.500 4.500l-4 4" stroke="#222" strokeWidth="1.2" /></Icon>
            <Clock>8:51 AM<br />11/12/2021</Clock>
            <Notice>
                <Icon w={16} h={15} vw={16} vh={15}><path d="M0 0h16v11H8l-4 4v-4H0z" fill="#111" /><path d="M3 3.500h10M3 6.500h10" stroke="#ddd" /></Icon>
                <Badge>2</Badge>
            </Notice>
        </Tray>
    </TaskBar>
);

export default function App() {
    return (
        <Screen>
            <GlobalStyle />
            <TitleBar>
                <NxLogo>NX</NxLogo>
                <NewFile>
                    <Icon w={12} h={13} vw={12} vh={13}><path d="M1 1h6.500L11 4.500V12H1z" stroke="#6b64a8" strokeWidth="1.4" /><path d="M7 1v4h4" stroke="#6b64a8" /></Icon>
                </NewFile>
                <QuickAccess>
                    <span>Window</span>
                    <Icon w={14}><path d="M1 1h14v14H1z" fill="#dff0ff" stroke="#2a4ac0" strokeWidth="2" /><path d="M1 2h14" stroke="#2a4ac0" strokeWidth="3" /></Icon>
                    <span>Window</span>
                    <Caret />
                    <Caret $line />
                </QuickAccess>
                <AppTitle>NX 12 - Modeling</AppTitle>
                <Brand>SIEMENS</Brand>
                <WindowControls>
                    <Icon w={11} vw={11}><path d="M1.5 9h7" stroke="#222" strokeWidth="2" /></Icon>
                    <Icon w={12} vw={12}><path d="M3.5 4V1.500h8v5H9M.8 5.200h7.700v4.500H.8z" stroke="#222" strokeWidth="1.3" /></Icon>
                    <Icon w={11} vw={11}><path d="M1 1l9 9M10 1l-9 9" stroke="#222" strokeWidth="1.5" /></Icon>
                </WindowControls>
            </TitleBar>
            <TabBar>
                <FileTab>File</FileTab>
                <ActiveTab>Surface</ActiveTab>
                <Tab $w={137.5}>Reverse Engineering</Tab>
                <Tab $w={49}>View</Tab>
                <Tab $w={63.5}>Render</Tab>
                <Tab $w={53.5}>Tools</Tab>
                <Tab $w={86}>Application</Tab>
                <Tab $w={152}>Engineering Die Wizard</Tab>
                <Tab $w={97}>Mold Wizard</Tab>
                <TabTools>
                    <FindBox>
                        Find a Command
                        <Icon w={14}><circle cx="10" cy="6" r="4.8" stroke="#444" strokeWidth="1.4" /><circle cx="10" cy="6" r="2" stroke="#666" /><path d="M6.500 9L1 14.500l1 1L7.500 10" stroke="#444" /></Icon>
                    </FindBox>
                    <FullscreenIcon />
                    <Icon w={13} h={11} vw={13} vh={11}><path d="M1 6l5.500-5L12 6M1 10l5.500-5L12 10" stroke="#333" strokeWidth="1.3" /></Icon>
                    <HelpDot>?</HelpDot>
                </TabTools>
            </TabBar>
            <Ribbon />
            <Toolbar />
            <Work>
                <ResourceBar />
                <Navigator />
                <Graphics>
                    <ViewStrip><ViewHandle /></ViewStrip>
                    <Model />
                </Graphics>
            </Work>
            <StatusBar>
                <span>Select curves/edges to add to section, or use MB2 to complete section</span>
                <StatusIcons>
                    <GreyTile><Grey size={12} d="M2 3l4 2 3-3 5 2M3 7l4 3 6-5M5 13l6-6" /></GreyTile>
                    <FullscreenIcon />
                    <NxBall size={14} />
                </StatusIcons>
            </StatusBar>
            <Taskbar />
            <StudioSurface />
            <Credit>
                <CreditKey>Youtube <i>:</i></CreditKey><CreditValue $color="#c01f2a">Phần Mềm Cơ Khí CTM</CreditValue>
                <CreditKey>Zalo <i>:</i></CreditKey><CreditValue $color="#2a9d5f" $wide>0325114887</CreditValue>
            </Credit>
        </Screen>
    );
}

/* ---------- styles ---------- */

const GlobalStyle = createGlobalStyle`
  * {
    box-sizing: border-box;
  }

  body {
    margin: 0;
    background: #000;
    overflow: hidden;
  }
`;

const Screen = styled.div`
  position: relative;
  width: 1280px;
  height: 720px;
  display: flex;
  flex-direction: column;
  padding: 0 2px;
  background: #000;
  color: ${ink};
  font-family: 'Noto Sans', 'Open Sans', sans-serif;
  font-size: 11.5px;
  letter-spacing: -0.2px;
  white-space: nowrap;
  overflow: hidden;
`;

const IconSvg = styled.svg`
  display: block;
  flex: none;
`;

const Caret = styled.i`
  display: block;
  flex: none;
  width: 0;
  height: 0;
  border: ${p => (p.$huge ? 5 : p.$big ? 4 : 3)}px solid transparent;
  border-top-color: ${p => (p.$up ? 'transparent' : p.$color || '#111')};
  border-bottom-color: ${p => (p.$up ? p.$color : 'transparent')};
  border-bottom-width: ${p => (p.$up ? 3 : 0)}px;
  border-top-width: ${p => (p.$up ? 0 : p.$huge ? 5 : p.$big ? 4 : 3)}px;

  ${p => p.$line && `
    width: 7px;
    height: 6px;
    border: 0;
    border-top: 1px solid #111;
    background: linear-gradient(#111, #111) 50% 2px / 6px 1px no-repeat,
      linear-gradient(#111, #111) 50% 3px / 4px 1px no-repeat,
      linear-gradient(#111, #111) 50% 4px / 2px 1px no-repeat;
  `}
`;

const TitleBar = styled.header`
  display: flex;
  align-items: center;
  height: 24px;
  flex: none;
  background: #fff;
`;

const NxLogo = styled.div`
  width: 38px;
  height: 17px;
  padding-left: 2px;
  border-right: 1px solid #ddd;
  font-size: 19px;
  line-height: 17px;
  font-weight: 800;
  letter-spacing: 0.3px;
  color: #8795a1;
`;

const NewFile = styled.div`
  width: 312.5px;
  padding-left: 10px;
`;

const QuickAccess = styled.div`
  display: flex;
  align-items: center;
  width: 400px;
  gap: 6px;
  letter-spacing: -0.3px;
  padding-bottom: 1px;
`;

const AppTitle = styled.div`
  width: 126px;
  padding-left: 17px;
  letter-spacing: -0.3px;
`;

const Brand = styled.div`
  width: 78px;
  margin-left: auto;
  padding-top: 3px;
  font-family: 'Open Sans', sans-serif;
  font-size: 12px;
  font-weight: 800;
  letter-spacing: 0.5px;
  color: #14a09c;
`;

const WindowControls = styled.div`
  display: flex;
  align-items: center;
  justify-content: space-between;
  width: 62px;
  padding: 0 2px 0 6px;
`;

const TabBar = styled.nav`
  display: flex;
  height: 25px;
  flex: none;
  background: #dcdcdc;
  line-height: 25px;
  font-size: 12px;
`;

const FileTab = styled.div`
  width: 54px;
  height: 24px;
  padding-right: 3px;
  background: ${teal};
  color: #fff;
  text-align: center;
`;

const ActiveTab = styled.div`
  width: 66px;
  margin-left: 266px;
  padding-right: 12px;
  border-top: 1px solid #aaa;
  background: #fff;
  color: #1c6e8c;
  text-align: right;
`;

const Tab = styled.div`
  width: ${p => p.$w}px;
  text-align: center;
`;

const TabTools = styled.div`
  display: flex;
  align-items: center;
  justify-content: space-between;
  margin-left: auto;
  width: 183px;
  padding-right: 4px;
`;

const FindBox = styled.div`
  display: flex;
  align-items: center;
  justify-content: space-between;
  width: 105px;
  height: 17px;
  padding: 0 1px 0 3px;
  border: 1px solid #999;
  background: #fff;
  color: #949494;
  font-size: 11px;
  letter-spacing: -0.3px;
`;

const HelpDot = styled.div`
  width: 13px;
  height: 13px;
  border-radius: 50%;
  background: #3a67c8;
  color: #fff;
  font-size: 10px;
  font-weight: 700;
  line-height: 13px;
  text-align: center;
`;

const RibbonBar = styled.section`
  display: flex;
  height: 80px;
  flex: none;
  border-bottom: 1px solid #d4d4d4;
  background: #fff;
  font-size: 11.2px;
  letter-spacing: -0.4px;
`;

const RibbonGroup = styled.div`
  display: flex;
  flex-direction: column;
  width: ${p => p.$w}px;
  height: 79px;
  background: linear-gradient(#d4d4d4, #d4d4d4) 100% 4px / 1px 71px no-repeat;
`;

const GroupBody = styled.div`
  display: flex;
  height: 66px;
  padding-left: ${p => p.$pad || 0}px;
`;

const GroupFoot = styled.div`
  display: flex;
  align-items: center;
  justify-content: center;
  height: 13px;
  padding-left: ${p => 6 + (p.$shift || 0)}px;
  color: #14596e;

  i {
    margin: -6px 8px 0 auto;
  }

  &::before {
    content: '';
    margin-right: auto;
  }
`;

const BigButton = styled.div`
  display: flex;
  flex: none;
  flex-direction: column;
  align-items: center;
  width: ${p => p.$w}px;
  line-height: 12px;
  text-align: center;
  letter-spacing: -0.5px;
`;

const BigIcon = styled.div`
  display: flex;
  align-items: center;
  height: 38px;
  margin-bottom: 1px;
`;

const MoreButton = styled.div`
  display: flex;
  flex: none;
  flex-direction: column;
  align-items: center;
  width: 36px;
  padding-top: 3px;
  line-height: 18px;

  i {
    margin-top: 1px;
  }
`;

const MoreFrame = styled.div`
  display: flex;
  align-items: center;
  justify-content: center;
  width: 36px;
  height: 33px;
  border: 1px solid #ddd;
  border-radius: 2px;
`;

const RibbonList = styled.div`
  display: flex;
  flex: none;
  flex-direction: column;
  justify-content: space-around;
  width: ${p => p.$w}px;
  padding: ${p => (p.$tall ? '1px 0 2px 4px' : '1px 0 3px 1px')};
  letter-spacing: ${p => (p.$tight ? '-0.6px' : '-0.4px')};
`;

const RibbonItem = styled.div`
  display: flex;
  align-items: center;
  gap: ${p => p.$gap}px;
  height: 20px;
`;

const GallerySpacer = styled.div`
  width: 281px;
  margin: 4px 0 0;
  border-right: 1px solid #ddd;
`;

const GalleryArrows = styled.div`
  display: flex;
  flex-direction: column;
  align-items: center;
  justify-content: space-between;
  width: 17px;
  padding: 13px 0 8px;
`;

const GalleryIcons = styled.div`
  display: flex;
  flex-direction: column;
  gap: 5px;
  width: 35px;
  padding: 4px 0 0 9px;
`;

const RibbonTail = styled.div`
  display: flex;
  flex: 1;
  align-items: flex-end;
  justify-content: flex-end;
  padding: 0 1px 8px;
`;

const ToolbarBar = styled.section`
  display: flex;
  align-items: center;
  height: 45px;
  flex: none;
  border-bottom: 1px solid #a9a9a9;
  background: #fff;
`;

const MenuButton = styled.div`
  display: flex;
  flex: none;
  align-items: center;
  gap: 4px;
  width: 350px;
  padding-left: 9px;
  letter-spacing: -0.5px;

  u {
    text-underline-offset: 2px;
  }
`;

const Slot = styled.div`
  display: flex;
  flex: none;
  align-items: center;
  justify-content: center;
  width: ${p => p.$w}px;
`;

const Toggle = styled.div`
  display: flex;
  flex: none;
  align-items: center;
  justify-content: center;
  width: 22px;
  height: 21px;
  margin-right: 3px;
  border: 1px solid #b5d8e3;
  background: #d3eaf2;
`;

const RuleSelect = styled.div`
  display: flex;
  flex: none;
  align-items: center;
  justify-content: space-between;
  width: 120px;
  height: 17px;
  padding: 0 5px 0 4px;
  border: 1px solid #8e8e8e;
  letter-spacing: -0.6px;
`;

const SnapIcons = styled.div`
  display: flex;
  flex: none;
  padding-left: 4px;
`;

const Stack = styled.div`
  display: flex;
  flex: none;
  flex-direction: column;
  align-items: center;
  width: ${p => p.$w}px;

  > * {
    margin: 3px 0;
  }

  > i {
    margin: 9px 0;
  }

  > span {
    height: 14px;
  }
`;

const VRule = styled.div`
  flex: none;
  width: 1px;
  height: ${p => p.$h}px;
  background: #d0d0d0;
`;

const ToolbarTail = styled.div`
  margin: 26px 1px 0 auto;
`;

const Work = styled.main`
  display: flex;
  height: 488px;
  flex: none;
  background: #fff;
`;

const Resources = styled.aside`
  width: 29px;
  background: #dadada;
  border-right: 1px solid #b0b0b0;
`;

const ResourceTab = styled.div`
  display: flex;
  align-items: ${p => (p.$end ? 'flex-end' : 'center')};
  justify-content: center;
  height: ${p => p.$h}px;
  padding-bottom: ${p => (p.$end ? 5 : 0)}px;
  margin: ${p => (p.$active ? '3px -1px 0 1px' : '0')};
  background: ${p => (p.$active ? '#fff' : 'transparent')};
`;

const NavPane = styled.div`
  width: 213px;
  padding: 0 9px 6px 6px;
  border-right: 1px solid #8d8d8d;
`;

const NavTitle = styled.div`
  width: 31px;
  height: 27px;
  padding-left: 3px;
  line-height: 28px;
  overflow: hidden;
`;

const NavTable = styled.div`
  height: 450px;
  padding: 1px 1px 0;
  border: 1px solid #aaa;
  overflow: hidden;
`;

const NavHead = styled.div`
  height: 18px;
  padding-left: 5px;
  border-bottom: 1px solid #d5d5d5;
  background: #f2f2f2;
  line-height: 17px;
`;

const NavRow = styled.div`
  display: flex;
  align-items: center;
  gap: 3px;
  height: 18.75px;
  padding-top: ${p => (p.$leaf ? 1 : 0)}px;
  padding-left: ${p => (p.$leaf ? 37 : 4)}px;
  border-bottom: 1px solid #e8e8e8;
  background:
    ${p => (p.$branch || p.$leaf ? `repeating-linear-gradient(#888 0 1px, transparent 1px 3px) 27px 0 / 1px ${p.$leaf ? 50 : 100}% no-repeat,` : '')}
    linear-gradient(#e8e8e8, #e8e8e8) 186px 0 / 1px 100% no-repeat,
    ${p => (p.$alt ? '#f8f8f8' : '#fff')};
  font-size: 11.5px;
  font-weight: 700;
  letter-spacing: -0.3px;
`;

const Expander = styled.div`
  width: 9px;
  height: 9px;
  border: 1px solid #ccc;
  background: #fff;
  color: #222;
  font-size: 9px;
  line-height: 6px;
  text-align: center;
`;

const Dots = styled.div`
  width: 3px;
  margin: 0 -2px;
  border-top: 1px dotted #888;
`;

const GreenBox = styled.div`
  display: flex;
  width: 12px;
  height: 12px;
  border: 1px solid #333;
  background: #fff;
`;

const HScroll = styled.div`
  display: flex;
  align-items: center;
  height: 15px;
  margin-top: 1px;
  padding: 0 3px;
  background: #f0f0f0;

  svg:last-child {
    margin-left: auto;
  }
`;

const Thumb = styled.div`
  width: 48px;
  height: 14px;
  margin-left: 3px;
  background: #c9c9c9;
`;

const NavFoot = styled.div`
  height: 5px;
  border: 1px solid #aaa;
  border-top: 0;
  background: #e6e6e6;
`;

const Graphics = styled.div`
  flex: 1;
`;

const ViewStrip = styled.div`
  height: 20px;
  padding-left: 108px;
  border-bottom: 2px solid ${teal};
`;

const ViewHandle = styled.div`
  width: 6px;
  height: 100%;
  background: ${teal};
`;

const ModelSvg = styled.svg`
  display: block;
  width: 1034px;
  height: 468px;
`;

const AxisText = styled.text`
  font-family: 'Noto Sans', sans-serif;
  font-size: 12px;
  stroke: none;
`;

const StatusBar = styled.footer`
  display: flex;
  align-items: center;
  justify-content: space-between;
  height: 21px;
  flex: none;
  padding: 0 22px 3px 2px;
  border-top: 1px solid #a0a0a0;
  background: #fff;
  font-size: 10.8px;
  font-weight: 700;
  letter-spacing: -0.5px;
`;

const StatusIcons = styled.div`
  display: flex;
  align-items: center;
  gap: 4px;

  svg:last-child {
    margin-left: 7px;
  }
`;

const GreyTile = styled.div`
  display: flex;
  align-items: center;
  justify-content: center;
  width: 15px;
  height: 15px;
  border: 1px solid #bbb;
  background: #e3e3e3;
`;

const TaskBar = styled.footer`
  display: flex;
  height: 37px;
  flex: none;
  background: linear-gradient(90deg, #f1dfd3, #ecdad5 30%, #ddd3d3 62%, #d8d5d4 75%, #dad7d5);
`;

const TaskItem = styled.div`
  display: flex;
  flex: none;
  align-items: center;
  justify-content: center;
  width: ${p => p.$w || 46}px;
  background-color: ${p => (p.$focus ? '#f7efea' : 'transparent')};
  background-image: ${p => (p.$open ? 'linear-gradient(#c6763c, #c6763c)' : 'none')};
  background-repeat: no-repeat;
  background-position: 50% 100%;
  background-size: ${p => (p.$focus ? '100%' : '37px')} 2px;
`;

const Tray = styled.div`
  display: flex;
  align-items: center;
  width: 287px;
  margin-left: auto;
  gap: 10px;
`;

const Weather = styled.div`
  display: flex;
  flex: none;
  align-items: center;
  gap: 9px;
  width: 111px;
  font-size: 13px;
  letter-spacing: -0.4px;
`;

const Clock = styled.div`
  flex: none;
  width: 56px;
  margin: 0 2px 0 -3px;
  font-size: 11.5px;
  line-height: 16.5px;
  letter-spacing: -0.6px;
  text-align: center;
`;

const Notice = styled.div`
  position: relative;
`;

const Badge = styled.div`
  position: absolute;
  left: 7px;
  top: 5px;
  width: 15px;
  height: 15px;
  border: 1px solid #777;
  border-radius: 50%;
  background: #dcd9d7;
  font-size: 10px;
  line-height: 13px;
  text-align: center;
`;

const Dialog = styled.div`
  position: absolute;
  left: 68px;
  top: 0;
  width: 284px;
  height: 506px;
  border: solid #dcdcdc;
  border-width: 0 1px 1px;
  background: #f0f0f0;
  letter-spacing: -0.42px;
`;

const DialogTitle = styled.div`
  display: flex;
  align-items: center;
  height: 23px;
  margin: 0 -1px 3px;
  padding: 0 8px 0 6px;
  background: ${teal};
  color: #fff;
  font-size: 13px;
  letter-spacing: -0.5px;

  span {
    flex: 1;
    padding: 0 0 2px 8px;
  }

  svg:last-child {
    margin-left: 6px;
  }
`;

const Section = styled.div`
  height: ${p => p.$h}px;
  margin: 0 4px 3.5px;
  padding: 0 9px;
  border-bottom: 1px solid #b9b9b9;
  background: #fff;
`;

const SectionHead = styled.div`
  display: flex;
  align-items: center;
  justify-content: space-between;
  height: 28px;
  margin: 0 -3px 0 -2px;
  padding-bottom: 6px;
  color: #1f6478;
  font-size: 13px;
  letter-spacing: -0.38px;
`;

const CurveRow = styled.div`
  display: flex;
  align-items: center;
  justify-content: space-between;
  height: ${p => p.$h}px;
  color: ${p => (p.$muted ? '#a0a0a0' : ink)};
`;

const PickField = styled.div`
  display: flex;
  align-items: center;
  gap: 4px;
  width: 198px;
  height: 30px;
  padding: 0 0 2px ${p => (p.$active ? 2 : 0)}px;
  background: ${p => (p.$active ? '#fedf78' : 'none')};
`;

const SmallBtn = styled.div`
  display: flex;
  align-items: center;
  justify-content: center;
  width: 23px;
  height: 22px;
  border: 1px solid #aaa;
  background: #fff;

  &:last-child {
    border-color: ${p => (p.$active ? '#6aa9bb' : '#777')};
    background: ${p => (p.$active ? '#5fa6bb' : '#fff')};
  }
`;

const WideBtn = styled.div`
  display: flex;
  align-items: center;
  justify-content: center;
  width: 30px;
  height: 30px;
  border: ${p => (p.$active ? 0 : 1)}px solid ${p => (p.$muted ? '#bbb' : '#777')};
  background: ${p => (p.$active ? '#fedf78' : '#fff')};
`;

const ApplyAll = styled.div`
  display: flex;
  align-items: center;
  gap: 6px;
  height: 20px;
`;

const CheckBox = styled.div`
  width: 12px;
  height: 12px;
  border: 1px solid #333;
`;

const ContRow = styled.div`
  display: flex;
  align-items: center;
  justify-content: space-between;
  height: 23.3px;
  color: ${p => (p.$off ? '#a0a0a0' : ink)};
`;

const ContSelect = styled.div`
  display: flex;
  align-items: center;
  justify-content: space-between;
  width: 132px;
  height: 21px;
  padding: 0 4px;
  border: 1px solid ${p => (p.$off ? '#cfcfcf' : '#777')};
  color: ${p => (p.$off ? '#858585' : ink)};
`;

const Expand = styled.div`
  display: flex;
  justify-content: center;
  height: 14px;
  margin: 0 4px;
  padding-top: 5px;
  border-bottom: 1px solid #b9b9b9;
`;

const DialogButtons = styled.div`
  display: flex;
  justify-content: flex-end;
  gap: 4.5px;
  padding: 6.5px 14px 0 0;
`;

const DialogButton = styled.div`
  width: 62px;
  height: 21px;
  border: 1px solid #ababab;
  background: #e1e1e1;
  line-height: 19px;
  text-align: center;
`;

const Credit = styled.div`
  position: absolute;
  left: 513px;
  top: 655px;
  width: 255px;
  height: 65px;
  display: grid;
  grid-template-columns: 60px 1fr;
  grid-auto-rows: 18.5px;
  column-gap: 3px;
  padding: 3px 0 0 21px;
  background: #fff;
  font-family: Lato, 'Noto Sans', sans-serif;
  font-size: 15px;
  line-height: 18.5px;
  letter-spacing: -0.35px;
`;

const CreditKey = styled.div`
  display: flex;
  justify-content: space-between;
  color: #111;

  i {
    font-style: normal;
  }
`;

const CreditValue = styled.div`
  padding-left: ${p => (p.$wide ? 2 : 0)}px;
  letter-spacing: -0.65px;
  color: ${p => p.$color};
`;
